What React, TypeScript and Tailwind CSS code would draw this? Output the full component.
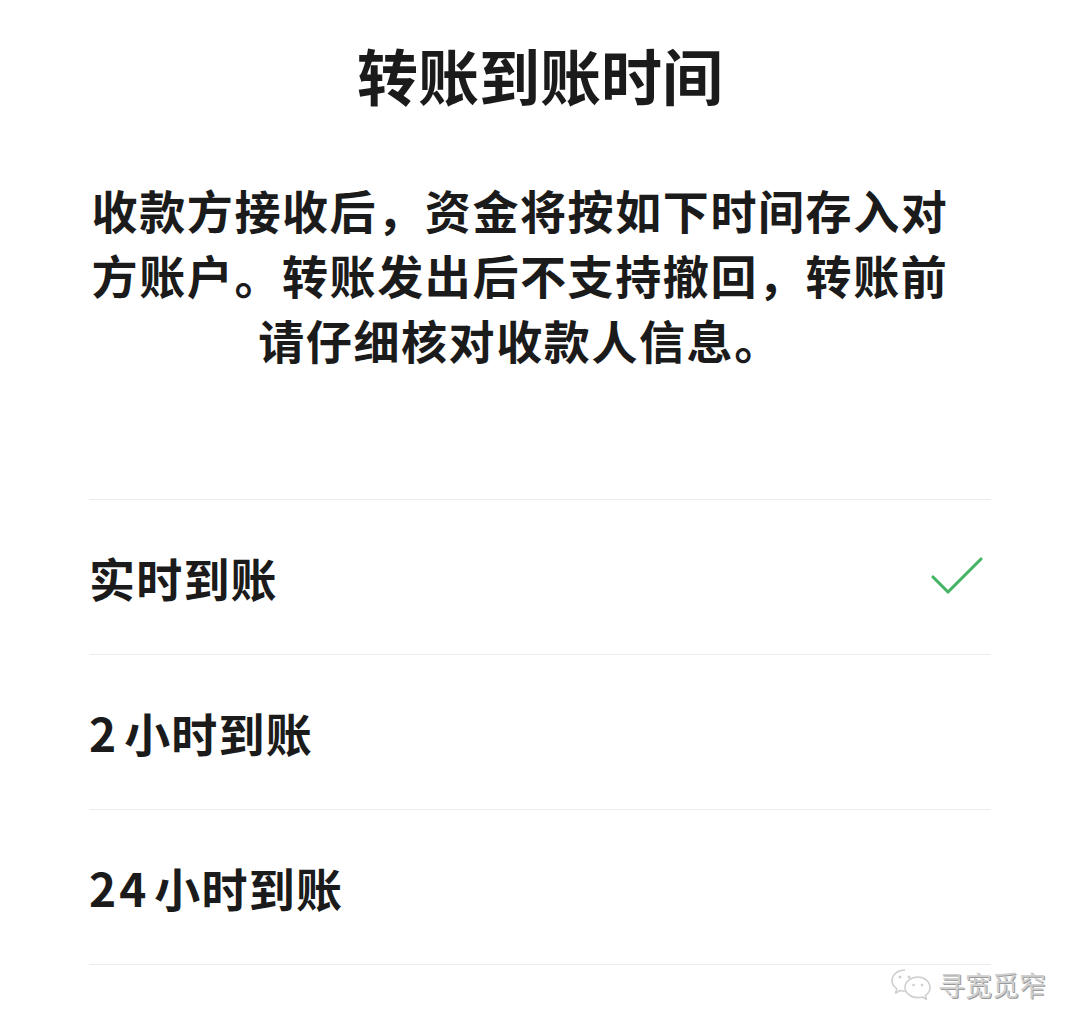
import { Check } from "lucide-react";

interface Option {
    hours?: string;
    label: string;
    selected?: boolean;
}

const options: Option[] = [
    { label: "实时到账", selected: true },
    { hours: "2", label: "小时到账" },
    { hours: "24", label: "小时到账" },
];

const notice = [
    "收款方接收后，资金将按如下时间存入对",
    "方账户。转账发出后不支持撤回，转账前",
    "请仔细核对收款人信息。",
];

function ChatBubbles() {
    return (
        <svg width="44" height="34" viewBox="0 0 44 34" fill="none">
            <g stroke="#cfcfcf" strokeWidth="1.6" strokeLinejoin="round">
                <path d="M15 2C7.8 2 2 6.8 2 12.6c0 3.3 1.9 6.2 4.8 8.2L5.6 25l4.6-2.5c1.5.4 3.1.7 4.8.7" fill="white" />
                <path d="M28 9c-7.2 0-13 4.6-13 10.3S20.8 29.6 28 29.6c1.5 0 2.9-.2 4.2-.6l4.2 2.4-1-3.8c2.8-1.9 4.6-4.8 4.6-8C40 13.6 34.6 9 28 9z" fill="white" />
            </g>
            <g fill="#cfcfcf">
                <circle cx="10" cy="9" r="1.5" />
                <circle cx="19" cy="9" r="1.5" />
                <circle cx="23.5" cy="17" r="1.3" />
                <circle cx="32" cy="17" r="1.3" />
            </g>
        </svg>
    );
}

export default function App() {
    return (
        <div
            className="relative h-[1035px] w-full overflow-hidden bg-white text-[#1b1b1b]"
            style={{ fontFamily: '"Noto Sans CJK SC", "Noto Sans", sans-serif' }}
        >
            <div className="mx-auto w-[902px]">
                <h1 className="pt-[39px] text-center text-[61px] font-bold leading-[72px]">
                    转账到账时间
                </h1>

                <div className="mt-[66px] w-[862px] text-center text-[46px] font-bold leading-[65px] tracking-[1.6px]">
                    {notice.map((line) => (
                        <p key={line}>{line}</p>
                    ))}
                </div>

                {/* delivery time options */}
                <ul className="mt-[127px] border-t border-[#ececec]">
                    {options.map((opt) => (
                        <li
                            key={opt.hours + opt.label}
                            className="flex h-[155px] items-center justify-between border-b border-[#ececec]"
                        >
                            <span className="text-[46px] font-bold tracking-[1.2px]">
                                {opt.hours && <span className="mr-[5px] tracking-[3px]">{opt.hours}</span>}
                                {opt.label}
                            </span>
                            {opt.selected && (
                                <Check className="-mr-[2px] h-[72px] w-[72px] text-[#45b463]" strokeWidth={1.05} />
                            )}
                        </li>
                    ))}
                </ul>
            </div>

            <div className="absolute bottom-[30px] right-[34px] flex items-center gap-[4px]">
                <ChatBubbles />
                <span className="text-[27px] text-[#d0d0d0] [text-shadow:1px_1px_0_#9a9a9a]">寻宽觅窄</span>
            </div>
        </div>
    );
}
